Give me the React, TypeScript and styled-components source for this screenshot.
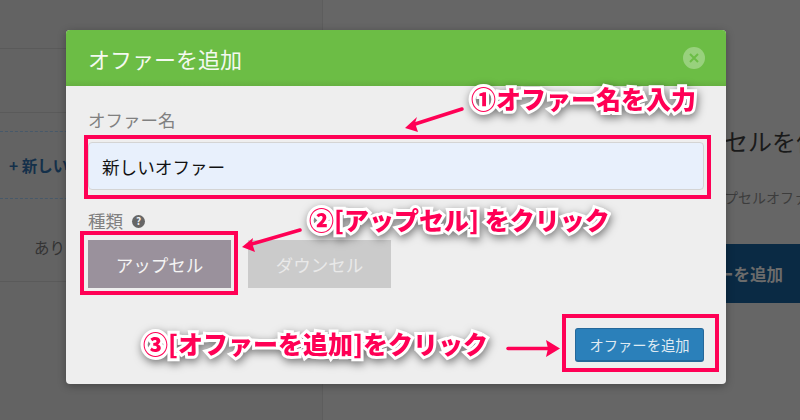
import React from 'react';
import styled, { createGlobalStyle } from 'styled-components';

const jp = `"Noto Sans CJK JP", "Noto Sans", sans-serif`;
const accent = '#ff0055';

const GlobalStyle = createGlobalStyle`
    html, body {
        margin: 0;
        padding: 0;
    }
    body {
        font-family: ${jp};
        overflow: hidden;
    }
    * {
        box-sizing: border-box;
    }
`;

const Page = styled.div`
    position: relative;
    display: flex;
    width: 800px;
    height: 420px;
    overflow: hidden;
    background: #666;
`;

const Sidebar = styled.div`
    display: flex;
    flex-direction: column;
    width: 323px;
    background: #636363;
    border-right: 1px solid #5d5d5d;
`;

const SideRow = styled.div<{ $height: number }>`
    height: ${(p) => p.$height}px;
    flex-shrink: 0;
    border-bottom: 1px solid #5a5a5a;
`;

const DashedRow = styled.div`
    display: flex;
    align-items: center;
    height: 68px;
    margin-top: 18px;
    padding-left: 9px;
    border-top: 1px dashed #47596a;
    border-bottom: 1px dashed #47596a;
    font-size: 15.5px;
    font-weight: 700;
    color: #14304a;
    white-space: nowrap;
`;

const PlainRow = styled.div`
    display: flex;
    align-items: center;
    height: 83px;
    padding: 14px 0 0 34px;
    border-bottom: 1px solid #5a5a5a;
    font-size: 15.5px;
    color: #333;
`;

const Main = styled.div`
    flex: 1;
    display: flex;
    flex-direction: column;
    align-items: flex-end;
    padding-top: 123px;
    overflow: hidden;
`;

const MainTitle = styled.div`
    width: 76px;
    height: 36px;
    font-size: 24px;
    line-height: 36px;
    color: #1a1a1a;
    white-space: nowrap;
`;

const MainText = styled.div`
    width: 76px;
    margin-top: 28px;
    font-size: 14px;
    line-height: 20px;
    color: #3c3c3c;
    white-space: nowrap;
`;

const MainButton = styled.div`
    display: flex;
    align-items: center;
    width: 83px;
    height: 59px;
    margin-top: 37px;
    background: #0a2a44;
    color: #6b6b6b;
    font-size: 16.5px;
    font-weight: 700;
    white-space: nowrap;
`;

const Modal = styled.div`
    position: absolute;
    left: 66px;
    top: 30px;
    display: flex;
    flex-direction: column;
    width: 660px;
    height: 354px;
    background: #eee;
    border-radius: 4px;
    box-shadow: 0 2px 9px rgba(0, 0, 0, 0.3);
    overflow: hidden;
`;

const ModalHeader = styled.div`
    display: flex;
    align-items: center;
    justify-content: space-between;
    height: 56px;
    padding: 0 21px 0 22px;
    background: linear-gradient(#6cbd45 88%, #66b041);
`;

const ModalTitle = styled.div`
    font-size: 22px;
    color: #f4f9f0;
`;

const CloseButton = styled.div`
    display: flex;
    align-items: center;
    justify-content: center;
    width: 22px;
    height: 22px;
    border-radius: 50%;
    background: rgba(255, 255, 255, 0.3);
`;

const ModalBody = styled.div`
    flex: 1;
    display: flex;
    flex-direction: column;
    padding: 20px 22px 22px;
`;

const FieldLabel = styled.label`
    display: flex;
    align-items: center;
    gap: 9px;
    height: 26px;
    font-size: 17.5px;
    color: #808080;
`;

const NameInput = styled.div`
    display: flex;
    align-items: center;
    width: 616px;
    height: 48px;
    margin-top: 10px;
    padding-left: 13px;
    background: #e8f0fc;
    border: 1px solid #d4d4d4;
    border-radius: 4px;
    font-size: 17.6px;
    color: #111;
`;

const TypeField = styled.div`
    margin-top: 17px;
`;

const HelpIcon = styled.span`
    display: inline-flex;
    align-items: center;
    justify-content: center;
    width: 13px;
    height: 13px;
    margin-top: 2px;
    border-radius: 50%;
    background: #666;
    color: #eee;
    font-size: 10px;
    font-weight: 700;
    line-height: 1;
`;

const TypeRow = styled.div`
    display: flex;
    gap: 17px;
    margin-top: 7px;
`;

const TypeButton = styled.div<{ $active?: boolean }>`
    display: flex;
    align-items: center;
    justify-content: center;
    width: 143px;
    height: 48px;
    background: ${(p) => (p.$active ? '#9a919c' : '#cbcbcb')};
    color: ${(p) => (p.$active ? '#f4f4f4' : '#e9e9e9')};
    font-size: 17.5px;
`;

const Footer = styled.div`
    display: flex;
    justify-content: flex-end;
    margin-top: auto;
`;

const SubmitButton = styled.div`
    display: flex;
    align-items: center;
    justify-content: center;
    width: 129px;
    height: 34px;
    background: #2b80ba;
    border: 1px solid #25689a;
    border-bottom-width: 2px;
    border-radius: 3px;
    color: #dfeaf2;
    font-size: 14.3px;
`;

const Frame = styled.div<{ $x: number; $y: number; $w: number; $h: number }>`
    position: absolute;
    left: ${(p) => p.$x}px;
    top: ${(p) => p.$y}px;
    width: ${(p) => p.$w}px;
    height: ${(p) => p.$h}px;
    border: 4px solid ${accent};
`;

const Note = styled.div<{ $x: number; $y: number }>`
    position: absolute;
    left: ${(p) => p.$x}px;
    top: ${(p) => p.$y}px;
    font-size: 25px;
    line-height: 36px;
    font-weight: 900;
    white-space: nowrap;
    color: ${accent};
    -webkit-text-stroke: 6px #fff;
    paint-order: stroke fill;
    filter: drop-shadow(1px 3px 4px rgba(0, 0, 0, 0.5));
`;

const Arrows = styled.svg`
    position: absolute;
    left: 0;
    top: 0;
`;

const arrowHeads = [
    '405,128 417,117 415,123 418,132',
    '242,247 253,238 252,243 255,252',
    '560,348.5 546,340 548,348.5 546,357',
];

export default function App() {
    return (
        <Page>
            <GlobalStyle />
            <Sidebar>
                <SideRow $height={49} />
                <SideRow $height={64} />
                <DashedRow>+ 新しい</DashedRow>
                <PlainRow>あり</PlainRow>
            </Sidebar>
            <Main>
                <MainTitle>セルを作成</MainTitle>
                <MainText>プセルオファー</MainText>
                <MainButton>ーを追加</MainButton>
            </Main>

            <Modal>
                <ModalHeader>
                    <ModalTitle>オファーを追加</ModalTitle>
                    <CloseButton>
                        <svg width="12" height="12" viewBox="0 0 12 12">
                            <path d="M2 2l8 8M10 2l-8 8" stroke="#6cbd45" strokeWidth="2" fill="none" />
                        </svg>
                    </CloseButton>
                </ModalHeader>
                <ModalBody>
                    <FieldLabel>オファー名</FieldLabel>
                    <NameInput>新しいオファー</NameInput>
                    <TypeField>
                        <FieldLabel>
                            種類
                            <HelpIcon>?</HelpIcon>
                        </FieldLabel>
                        <TypeRow>
                            <TypeButton $active>アップセル</TypeButton>
                            <TypeButton>ダウンセル</TypeButton>
                        </TypeRow>
                    </TypeField>
                    <Footer>
                        <SubmitButton>オファーを追加</SubmitButton>
                    </Footer>
                </ModalBody>
            </Modal>

            <Frame $x={84} $y={135} $w={627} $h={64} />
            <Frame $x={80} $y={231} $w={158} $h={64} />
            <Frame $x={562} $y={314} $w={157} $h={58} />

            <Arrows width="800" height="420" viewBox="0 0 800 420">
                <g stroke={accent} strokeWidth="3.5" strokeLinecap="round" fill="none">
                    <path d="M462 109L412 125" />
                    <path d="M300 230L250 244.5" />
                    <path d="M508 348.5H550" />
                </g>
                {arrowHeads.map((points) => (
                    <polygon key={points} points={points} fill={accent} />
                ))}
            </Arrows>

            <Note $x={471} $y={80}>①オファー名を入力</Note>
            <Note $x={309} $y={201}>②[アップセル] をクリック</Note>
            <Note $x={143} $y={325}>③[オファーを追加]をクリック</Note>
        </Page>
    );
}
